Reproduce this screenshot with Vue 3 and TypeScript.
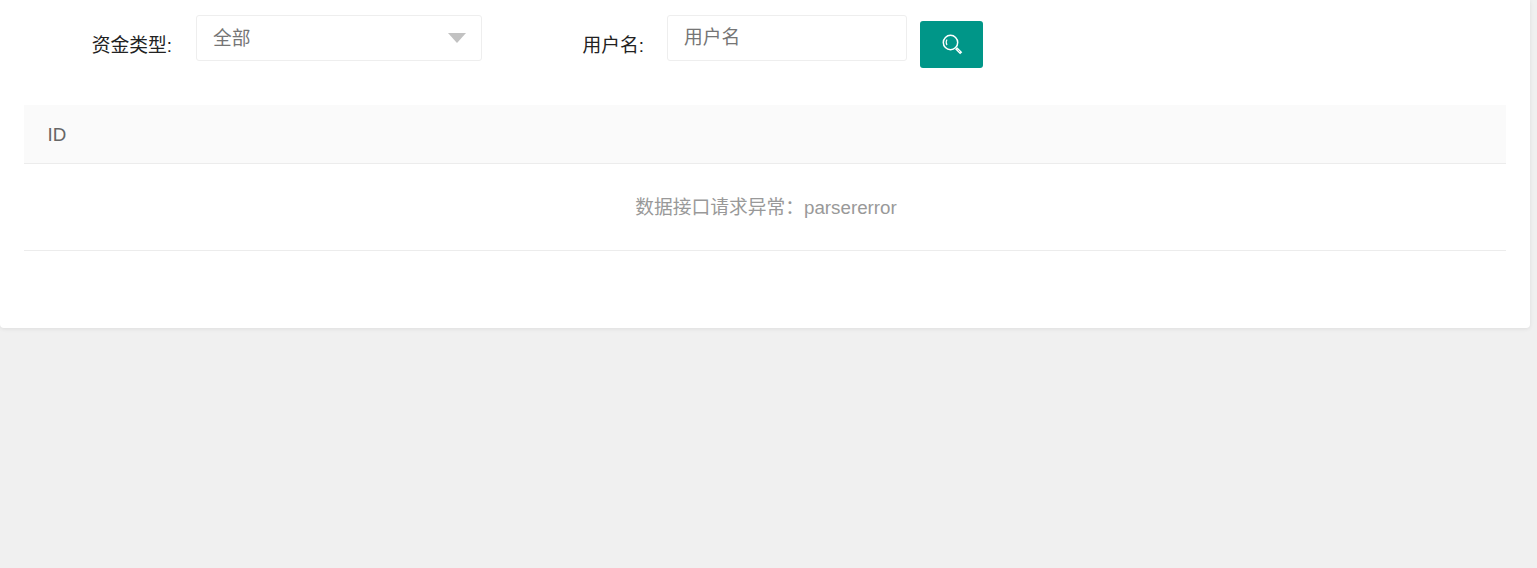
<script setup lang="ts">
import { ref } from 'vue'

const fundType = ref('全部')
const username = ref('')
const columns = ref(['ID'])
const message = ref('数据接口请求异常：parsererror')
</script>

<template>
  <div class="page">
    <div class="card">
      <div class="filter">
        <label class="label label-type">资金类型:</label>
        <div class="select">
          <span>{{ fundType }}</span>
          <i class="arrow"></i>
        </div>
        <label class="label label-user">用户名:</label>
        <input v-model="username" class="input" placeholder="用户名" />
        <button class="search" type="button" aria-label="搜索">
          <svg width="22" height="22" viewBox="0 0 22 22" fill="none" stroke="#fff">
            <circle cx="9.5" cy="8.5" r="7.2" stroke-width="1.5" />
            <path d="M6 5.5c-1 1.6-1 4 0 5.6" stroke-width="1.1" />
            <path d="M15.2 14.2l5 5" stroke-width="3" />
            <path d="M16.5 15.5l2.6 2.6" stroke="#7fcac3" stroke-width="1" />
          </svg>
        </button>
      </div>
      <table class="table">
        <thead>
          <tr>
            <th v-for="col in columns" :key="col">{{ col }}</th>
          </tr>
        </thead>
        <tbody>
          <tr>
            <td :colspan="columns.length">{{ message }}</td>
          </tr>
        </tbody>
      </table>
    </div>
  </div>
</template>

<style>
html,
body {
  margin: 0;
  background: #f0f0f0;
}
</style>

<style scoped>
.page {
  height: 568px;
  overflow: hidden;
  font-family: "Liberation Sans", "Noto Sans CJK SC", sans-serif;
  font-size: 18.75px;
}

.card {
  width: 1530px;
  height: 328px;
  box-sizing: border-box;
  padding: 15px 24px 0;
  background: #fff;
  border-radius: 0 0 4px 4px;
  box-shadow: 0 1px 4px rgba(0, 0, 0, 0.08);
}

.filter {
  display: flex;
  align-items: flex-start;
  height: 90px;
}

.label {
  color: #222;
  line-height: 61px;
  text-align: right;
}

.label-type {
  width: 148px;
  margin-right: 24px;
}

.label-user {
  width: 162px;
  margin-right: 23px;
}

.select,
.input {
  box-sizing: border-box;
  height: 46px;
  padding: 0 16px;
  border: 1px solid #eee;
  border-radius: 3px;
  background: #fff;
  color: #757575;
  font: inherit;
}

.select {
  display: flex;
  align-items: center;
  justify-content: space-between;
  width: 286px;
  padding-bottom: 4px;
}

.arrow {
  width: 0;
  height: 0;
  margin-top: 4px;
  margin-right: -1px;
  border-style: solid;
  border-width: 10px 9.5px 0;
  border-color: #c2c2c2 transparent transparent;
}

.input {
  width: 240px;
  outline: none;
}

.input::placeholder {
  color: #757575;
  opacity: 1;
}

.search {
  display: flex;
  align-items: center;
  justify-content: center;
  width: 63px;
  height: 47px;
  margin: 6px 0 0 13px;
  padding: 0;
  border: 0;
  border-radius: 3px;
  background: #009688;
}

.table {
  width: 100%;
  border-collapse: collapse;
}

th {
  height: 58px;
  padding: 2px 24px 0 23.5px;
  box-sizing: border-box;
  background: #fafafa;
  border-bottom: 1px solid #ececec;
  color: #666;
  font-weight: 400;
  text-align: left;
}

td {
  height: 87px;
  box-sizing: border-box;
  padding: 0 23px 2px 25px;
  border-bottom: 1px solid #ececec;
  color: #999;
  text-align: center;
}
</style>
